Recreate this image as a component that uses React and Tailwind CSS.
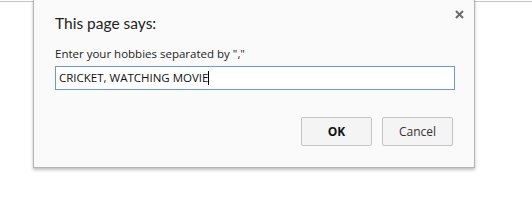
export default function App() {
  return (
    <div className="relative w-[532px] h-[213px] bg-white overflow-hidden">
      <div className="mt-px h-px bg-[#c4c4c4]" />
      <div
        className="absolute left-[33px] top-[-1px] w-[442px] h-[169px] bg-[#fafafa] border border-[#b4b4b4] shadow-[0_2px_3px_rgba(0,0,0,0.25)] pl-[21px] pr-[20px] pt-[12px]"
        style={{ fontFamily: '"Open Sans", "Noto Sans", sans-serif' }}
      >
        <button className="absolute right-[9px] top-[8px] w-[12px] h-[12px] flex items-center justify-center">
          <svg width="9" height="9" viewBox="0 0 9 9">
            <path d="M1 1L8 8M8 1L1 8" stroke="#6a6a6a" strokeWidth="2" />
          </svg>
        </button>
        <div className="text-[15.5px] leading-[22px] text-[#222]" style={{ fontFamily: 'Lato, "Open Sans", sans-serif' }}>This page says:</div>
        <div className="mt-[12px] text-[11.5px] leading-[16px] text-[#222]">Enter your hobbies separated by ","</div>
        <div className="mt-[4px] w-[400px] h-[24px] border border-[#6d97d6] bg-white flex items-center pl-[3px] text-[11.5px] text-[#111]">
          <span>CRICKET, WATCHING MOVIE</span>
          <span className="inline-block w-px h-[14px] bg-black" />
        </div>
        <div className="mt-[27px] flex justify-end gap-[10px] pr-[1px]">
          <button className="w-[71px] h-[29px] bg-[#f4f4f4] border border-[#c4c4c4] rounded-[2px] text-[12px] font-bold text-[#111]">OK</button>
          <button className="w-[71px] h-[29px] bg-[#f4f4f4] border border-[#c4c4c4] rounded-[2px] text-[12px] text-[#333]">Cancel</button>
        </div>
      </div>
    </div>
  );
}
